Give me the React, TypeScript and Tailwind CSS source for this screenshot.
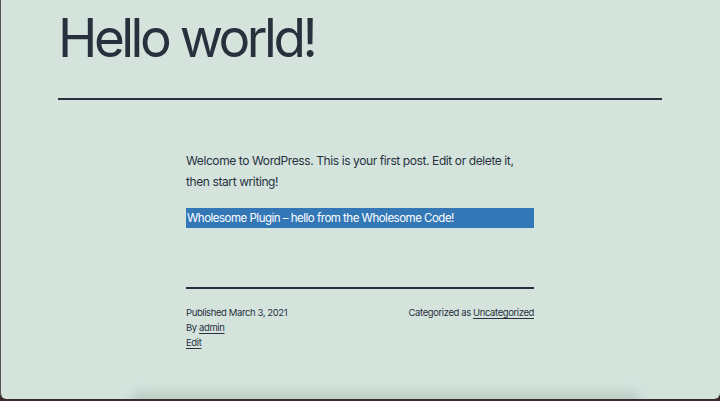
export default function App() {
  return (
    <div className="w-[720px] h-[401px] bg-[#3a2a2c] overflow-hidden" style={{ fontFamily: "Inter, 'Liberation Sans', sans-serif" }}>
      <div className="h-[399px] bg-[#d4e4dd] rounded-b-[6px] border-l border-[#555] relative overflow-hidden">
        <div className="pl-[57px] pr-[58px] pt-[6px]">
          <h1 className="text-[53px] leading-[64px] text-[#28303d] tracking-[-3.5px] font-normal">Hello world!</h1>
          <div className="mt-[28px] h-[2px] bg-[#28303d]" />
        </div>
        <div className="w-[348px] ml-[185px] mt-[50px] text-[#28303d]">
          <p className="text-[12px] leading-[21px] tracking-[-0.4px]">Welcome to WordPress. This is your first post. Edit or delete it, then start writing!</p>
          <div className="mt-[16px] h-[20px] bg-[#3477b7] text-white text-[11.5px] leading-[20px] tracking-[-0.5px] pl-[1px]">Wholesome Plugin – hello from the Wholesome Code!</div>
          <div className="mt-[59px] h-[2px] bg-[#28303d]" />
          <div className="mt-[16px] flex justify-between text-[9.5px] leading-[15px] tracking-[-0.4px]">
            <div className="flex flex-col">
              <span>Published March 3, 2021</span>
              <span>By <span className="underline underline-offset-2">admin</span></span>
              <span><span className="underline underline-offset-2">Edit</span></span>
            </div>
            <div>Categorized as <span className="underline underline-offset-2">Uncategorized</span></div>
          </div>
        </div>
        <div className="absolute left-[130px] right-[80px] bottom-[-6px] h-[12px] rounded-full bg-[#b8c8c1] blur-[6px]" />
      </div>
    </div>
  );
}
